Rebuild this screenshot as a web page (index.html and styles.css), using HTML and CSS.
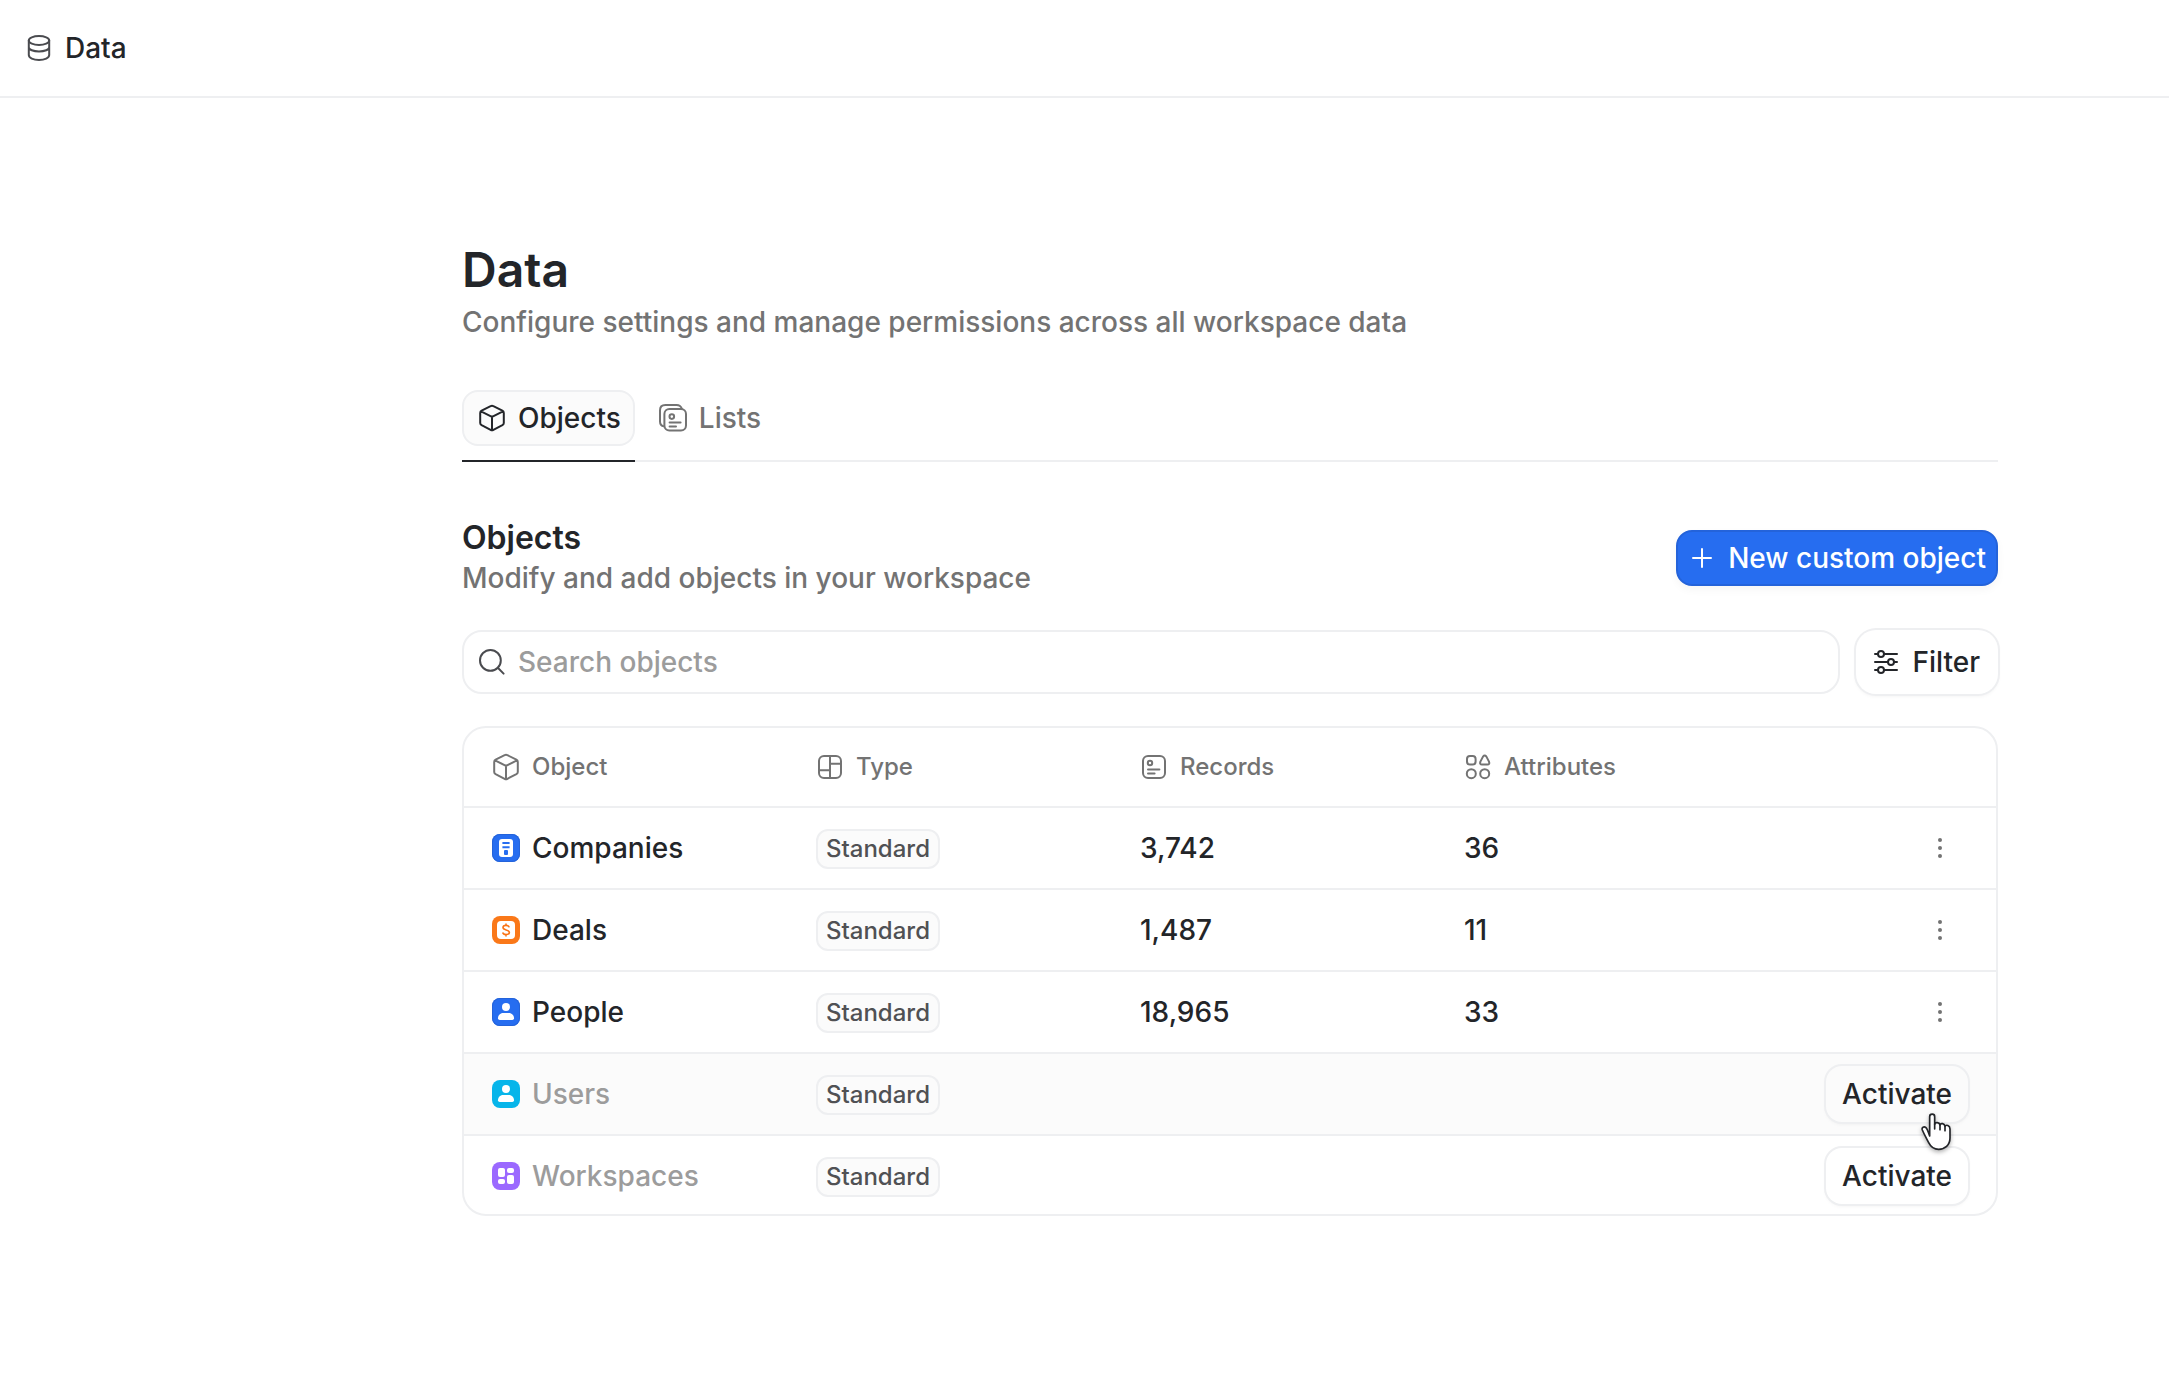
FILE: index.html
```html
<!DOCTYPE html>
<html lang="en">
<head>
  <meta charset="UTF-8">
  <meta name="viewport" content="width=device-width, initial-scale=1">
  <title>Data</title>
  <link rel="stylesheet" href="styles.css">
</head>
<body>

<!-- shared icons -->
<svg class="sprite" aria-hidden="true">
  <symbol id="i-cube" viewBox="0 0 28 28">
    <path d="M12.600 2.200Q14 1.400 15.400 2.200L24.400 6.600Q25.800 7.400 25.800 9V19Q25.800 20.400 24.400 21.200L15.400 25.800Q14 26.600 12.600 25.800L3.600 21.200Q2.200 20.400 2.200 19V9Q2.200 7.400 3.600 6.600ZM3 7.400 14 12.800 25 7.400M14 12.800V26"/>
  </symbol>
  <symbol id="i-record" viewBox="0 0 28 28">
    <rect x="3" y="3" width="22" height="22" rx="5"/>
    <circle cx="10" cy="10" r="2.2"/>
    <path d="M8 16.4H19.4M8 20.4H14.6"/>
  </symbol>
  <symbol id="i-person" viewBox="0 0 28 28">
    <circle cx="14" cy="9" r="4"/>
    <path d="M6 20.3C6 16.6 8.8 15 11.4 15H16.6C19.2 15 22 16.6 22 20.3Q22 22 20.3 22H7.7Q6 22 6 20.3Z"/>
  </symbol>
  <symbol id="i-dots" viewBox="0 0 28 28">
    <circle cx="14" cy="6" r="2"/>
    <circle cx="14" cy="14" r="2"/>
    <circle cx="14" cy="22" r="2"/>
  </symbol>
</svg>

<header class="topbar">
  <svg class="icon" viewBox="0 0 28 28">
    <ellipse cx="14" cy="6.5" rx="10.2" ry="4.4"/>
    <path d="M3.8 6.500V21C3.8 24 8.4 26 14 26S24.2 24 24.2 21V6.500M3.800 13.200C3.800 15.600 8.400 17.400 14 17.400S24.200 15.600 24.200 13.200"/>
  </svg>
  <span>Data</span>
</header>

<main class="page">
  <h1>Data</h1>
  <p class="subtitle">Configure settings and manage permissions across all workspace data</p>

  <nav class="tabs">
    <div class="tab-wrap active">
      <button class="tab" type="button"><svg class="icon"><use href="#i-cube"/></svg>Objects</button>
    </div>
    <div class="tab-wrap">
      <button class="tab" type="button">
        <svg class="icon" viewBox="0 0 28 28">
          <rect x="5.4" y="5" width="21.6" height="21.6" rx="5"/>
          <path d="M5 22.4Q1 21.4 1 17.4V6.4Q1 1 6.4 1H17.6Q21.6 1 23 5M10.6 18.6H21.6M10.6 22.6H17"/>
          <circle cx="12.8" cy="12.6" r="2.3"/>
        </svg>Lists
      </button>
    </div>
  </nav>

  <section class="section-head">
    <div>
      <h2>Objects</h2>
      <p class="subtitle">Modify and add objects in your workspace</p>
    </div>
    <button class="btn-primary" type="button">
      <svg class="icon" viewBox="0 0 28 28"><path d="M14 5V23M5 14H23"/></svg>New custom object
    </button>
  </section>

  <div class="toolbar">
    <label class="search">
      <svg class="icon" viewBox="0 0 28 28"><circle cx="12.4" cy="12.4" r="10.4"/><path d="M19.800 19.800 25.600 25.600"/></svg>
      <input type="text" placeholder="Search objects" aria-label="Search objects">
    </label>
    <button class="btn filter" type="button">
      <svg class="icon" viewBox="0 0 28 28">
        <circle cx="9" cy="6" r="3"/><circle cx="19" cy="14" r="3"/><circle cx="9" cy="22" r="3"/>
        <path d="M3 6H6M12 6H25M3 14H16M22 14H25M3 22H6M12 22H25"/>
      </svg>Filter
    </button>
  </div>

  <div class="table-card">
    <table>
      <colgroup>
        <col class="col"><col class="col"><col class="col"><col class="col"><col>
      </colgroup>
      <thead>
        <tr>
          <th><div class="cell"><svg class="icon"><use href="#i-cube"/></svg>Object</div></th>
          <th><div class="cell"><svg class="icon" viewBox="0 0 28 28"><rect x="3" y="3" width="22" height="22" rx="5"/><path d="M14 3V25M14 10.8H25M3 17.2H14"/></svg>Type</div></th>
          <th><div class="cell"><svg class="icon"><use href="#i-record"/></svg>Records</div></th>
          <th><div class="cell"><svg class="icon" viewBox="0 0 28 28"><rect x="3" y="3" width="8.6" height="8.6" rx="3"/><circle cx="7.3" cy="20.7" r="4.5"/><circle cx="20.7" cy="20.7" r="4.5"/><path d="M19 3.6Q20.7 1.4 22.4 3.6L25 8.6Q26 11.6 23.4 11.6H18Q15.4 11.6 16.4 8.6Z"/></svg>Attributes</div></th>
          <th></th>
        </tr>
      </thead>
      <tbody>
        <tr>
          <td><div class="cell">
            <svg class="badge blue" viewBox="0 0 28 28"><rect x="7" y="5" width="14" height="18" rx="3"/><path class="cut" d="M10.4 9H17.6M10.4 13.2H17.6"/><rect class="hole" x="12" y="16" width="4" height="5" rx="1"/></svg>
            Companies</div></td>
          <td><span class="tag">Standard</span></td>
          <td>3,742</td>
          <td>36</td>
          <td class="actions"><button class="more" type="button" aria-label="More"><svg><use href="#i-dots"/></svg></button></td>
        </tr>
        <tr>
          <td><div class="cell">
            <svg class="badge orange" viewBox="0 0 28 28"><rect x="5" y="5" width="18" height="18" rx="4"/><path class="cut thin" d="M17.2 11.4C16.8 10 15.6 9.4 14 9.4C12.2 9.4 11 10.2 11 11.6C11 14.8 17.4 13 17.4 16.4C17.4 17.8 16 18.6 14 18.6C12.2 18.6 11 17.8 10.6 16.6M14 7.4V9.4M14 18.6V20.6"/></svg>
            Deals</div></td>
          <td><span class="tag">Standard</span></td>
          <td>1,487</td>
          <td>11</td>
          <td class="actions"><button class="more" type="button" aria-label="More"><svg><use href="#i-dots"/></svg></button></td>
        </tr>
        <tr>
          <td><div class="cell"><svg class="badge blue"><use href="#i-person"/></svg>People</div></td>
          <td><span class="tag">Standard</span></td>
          <td>18,965</td>
          <td>33</td>
          <td class="actions"><button class="more" type="button" aria-label="More"><svg><use href="#i-dots"/></svg></button></td>
        </tr>
        <tr class="inactive hovered">
          <td><div class="cell"><svg class="badge cyan"><use href="#i-person"/></svg>Users</div></td>
          <td><span class="tag">Standard</span></td>
          <td></td>
          <td></td>
          <td class="actions">
            <button class="btn activate" type="button">Activate
              <svg class="cursor" viewBox="0 0 96 120">
                <path d="M29 72V14A7.500 7.500 0 0 1 44 14V37C45 30 58 30 60 39C62 32 74 34 75 43C78 37 90 40 90 51V78C90 100 74 112 56 112C40 112 32 104 26 92C20 80 12 66 7 54C4 46 12 42 18 47C23 52 25 62 29 72Z"/>
                <path d="M44 36V51M60 40V53M75 44V56"/>
              </svg>
            </button>
          </td>
        </tr>
        <tr class="inactive">
          <td><div class="cell">
            <svg class="badge purple" viewBox="0 0 28 28"><rect x="6" y="6" width="7" height="9" rx="2"/><rect x="15" y="6" width="7" height="5" rx="2"/><rect x="6" y="17" width="7" height="5" rx="2"/><rect x="15" y="13" width="7" height="9" rx="2"/></svg>
            Workspaces</div></td>
          <td><span class="tag">Standard</span></td>
          <td></td>
          <td></td>
          <td class="actions"><button class="btn activate" type="button">Activate</button></td>
        </tr>
      </tbody>
    </table>
  </div>
</main>

</body>
</html>
```
FILE: styles.css
```css
:root {
  --text: #232529;
  --muted: #737373;
  --faint: #9c9c9c;
  --line: #eeeff1;
  --soft: #fbfbfb;
  --blue: #266df0;
}
* {
  box-sizing: border-box;
}
body {
  margin: 0;
  background: #fff;
  color: var(--text);
  font-family: Inter, "Liberation Sans", sans-serif;
  font-size: 28px;
  font-weight: 500;
  line-height: 40px;
}
h1, h2, p {
  margin: 0;
}
button, input {
  font: inherit;
  color: inherit;
}
button {
  cursor: pointer;
}
.sprite {
  display: block;
  width: 0;
  height: 0;
}
.icon {
  flex: none;
  width: 28px;
  height: 28px;
  fill: none;
  stroke: currentColor;
  stroke-width: 2;
  stroke-linecap: round;
  stroke-linejoin: round;
}

/* top bar */
.topbar {
  display: flex;
  align-items: center;
  gap: 12px;
  height: 98px;
  padding: 0 25px;
  border-bottom: 2px solid var(--line);
}
.topbar .icon {
  color: #4a4b4f;
}

.page {
  padding: 144px 171px 80px 462px;
}
h1 {
  margin-bottom: 4px;
  font-size: 48px;
  font-weight: 600;
  line-height: 56px;
}
h2 {
  font-size: 32px;
  font-weight: 600;
  line-height: 40px;
}
.subtitle {
  color: var(--muted);
}

/* tabs */
.tabs {
  display: flex;
  gap: 8px;
  margin-top: 48px;
  box-shadow: inset 0 -2px var(--line);
}
.tab-wrap {
  padding-bottom: 16px;
}
.tab-wrap.active {
  box-shadow: inset 0 -2px var(--text);
}
.tab {
  display: flex;
  align-items: center;
  gap: 12px;
  height: 56px;
  padding: 0 12px 0 14px;
  border: 2px solid transparent;
  border-radius: 16px;
  background: none;
  color: var(--muted);
}
.active .tab {
  border-color: var(--line);
  background: var(--soft);
  color: var(--text);
}

/* section heading and search */
.section-head {
  display: flex;
  align-items: center;
  justify-content: space-between;
  margin-top: 56px;
}
.btn-primary {
  display: flex;
  align-items: center;
  gap: 12px;
  height: 56px;
  padding: 0 10px;
  border: 2px solid #2463da;
  border-radius: 16px;
  background: var(--blue);
  color: #fff;
  box-shadow: 0 4px 8px rgba(0, 0, 0, 0.04);
}
.toolbar {
  display: flex;
  gap: 16px;
  margin: 32px 0;
}
.search {
  display: flex;
  flex: 1;
  align-items: center;
  gap: 12px;
  height: 64px;
  padding: 0 14px;
  border: 2px solid var(--line);
  border-radius: 20px;
}
.search .icon {
  color: #4a4b4f;
}
.search input {
  flex: 1;
  min-width: 0;
  padding: 0;
  border: 0;
  outline: 0;
  background: none;
}
.search input::placeholder {
  color: var(--faint);
  opacity: 1;
}
.btn {
  display: flex;
  align-items: center;
  gap: 12px;
  border: 0;
  border-radius: 16px;
  background: #fff;
  box-shadow: 0 0 0 2px var(--line), 0 2px 4px rgba(0, 0, 0, 0.06);
}
.filter {
  height: 64px;
  padding: 0 18px 0 16px;
  border-radius: 20px;
}

/* table */
.table-card {
  overflow: hidden;
  border: 2px solid var(--line);
  border-radius: 24px;
}
table {
  width: 100%;
  table-layout: fixed;
  border-collapse: separate;
  border-spacing: 0;
}
.col {
  width: 324px;
}
th, td {
  height: 82px;
  padding: 0 0 0 28px;
  border-bottom: 2px solid var(--line);
  text-align: left;
}
th {
  height: 80px;
  color: var(--muted);
  font-size: 24px;
  font-weight: 500;
}
tr:last-child td {
  padding-top: 2px;
  height: 78px;
  border-bottom: 0;
}
thead tr:last-child th {
  border-bottom: 2px solid var(--line);
}
.cell {
  display: flex;
  align-items: center;
  gap: 12px;
}
.badge {
  flex: none;
  width: 28px;
  height: 28px;
  border-radius: 8px;
  fill: #fff;
}
.cut {
  fill: none;
  stroke: var(--blue);
  stroke-width: 2;
}
.cut.thin {
  stroke: #f97316;
  stroke-width: 1.6;
}
.hole {
  fill: var(--blue);
}
.blue {
  background: var(--blue);
  box-shadow: inset 0 0 0 1px #2463da;
}
.orange {
  background: #fa7819;
}
.cyan {
  background: #07b5ea;
}
.purple {
  background: #9b69ff;
}
.tag {
  display: inline-block;
  height: 40px;
  padding: 0 8px;
  border: 2px solid var(--line);
  border-radius: 12px;
  background: var(--soft);
  color: #505154;
  font-size: 24px;
  line-height: 36px;
  vertical-align: middle;
}
.inactive {
  color: var(--faint);
}
.hovered {
  background: var(--soft);
}
.actions {
  padding-right: 28px;
}
.more {
  display: block;
  width: 56px;
  height: 56px;
  margin-left: auto;
  padding: 14px;
  border: 0;
  background: none;
}
.more svg {
  display: block;
  width: 28px;
  height: 28px;
  fill: var(--muted);
}
.activate {
  position: relative;
  height: 56px;
  margin-left: auto;
  padding: 0 16px;
  color: var(--text);
}
.hovered .activate {
  background: var(--soft);
}

/* pointer over the hovered button */
.cursor {
  position: absolute;
  right: 16px;
  bottom: -30px;
  z-index: 1;
  width: 32px;
  height: 40px;
  fill: #fff;
  stroke: var(--text);
  stroke-width: 5;
  stroke-linecap: round;
  stroke-linejoin: round;
  filter: drop-shadow(0 2px 2px rgba(0, 0, 0, 0.3));
}
```
